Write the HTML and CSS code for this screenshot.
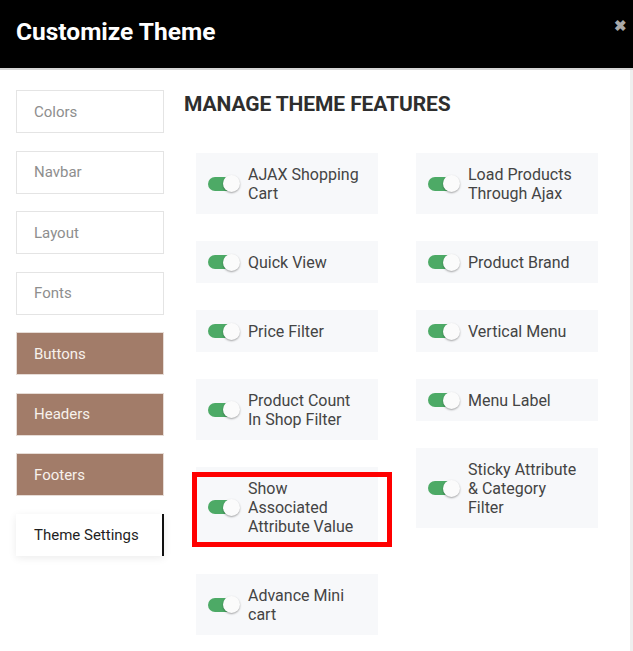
FILE: index.html
```html
<!DOCTYPE html>
<html lang="en">
<head>
<meta charset="utf-8">
<title>Customize Theme</title>
<link rel="stylesheet" href="styles.css">
</head>
<body>
<div class="modal">
  <header class="header">
    <h1 class="title">Customize Theme</h1>
    <span class="close">&#x2716;</span>
  </header>
  <div class="body">
    <nav class="sidebar">
      <div class="tab">Colors</div>
      <div class="tab">Navbar</div>
      <div class="tab">Layout</div>
      <div class="tab">Fonts</div>
      <div class="tab tab-brown">Buttons</div>
      <div class="tab tab-brown">Headers</div>
      <div class="tab tab-brown">Footers</div>
      <div class="tab tab-active">Theme Settings</div>
    </nav>
    <main class="main">
      <h2 class="heading">MANAGE THEME FEATURES</h2>
      <div class="features">
        <div class="col">
          <div class="card"><span class="toggle"></span><span class="label">AJAX Shopping Cart</span></div>
          <div class="card"><span class="toggle"></span><span class="label">Quick View</span></div>
          <div class="card"><span class="toggle"></span><span class="label">Price Filter</span></div>
          <div class="card"><span class="toggle"></span><span class="label">Product Count In Shop Filter</span></div>
          <div class="card card-marked"><span class="toggle"></span><span class="label">Show Associated Attribute Value</span></div>
          <div class="card"><span class="toggle"></span><span class="label">Advance Mini cart</span></div>
        </div>
        <div class="col">
          <div class="card"><span class="toggle"></span><span class="label">Load Products Through Ajax</span></div>
          <div class="card"><span class="toggle"></span><span class="label">Product Brand</span></div>
          <div class="card"><span class="toggle"></span><span class="label">Vertical Menu</span></div>
          <div class="card"><span class="toggle"></span><span class="label">Menu Label</span></div>
          <div class="card"><span class="toggle"></span><span class="label">Sticky Attribute &amp; Category Filter</span></div>
        </div>
      </div>
    </main>
  </div>
</div>
</body>
</html>
```

FILE: styles.css
```css
* { box-sizing: border-box; }
html, body { margin: 0; padding: 0; background: #fff; }
body { font-family: Roboto, "Liberation Sans", Arial, sans-serif; width: 633px; height: 651px; overflow: hidden; }

.modal { width: 633px; height: 651px; display: flex; flex-direction: column; }

.header {
  position: relative;
  height: 70px;
  flex: none;
  background: #000;
  border-bottom: 2px solid #d6d6d6;
  padding-left: 16px;
  display: flex;
  align-items: center;
}
.title {
  margin: 0 0 6px 0;
  color: #fff;
  font-size: 24.5px;
  font-weight: 700;
  letter-spacing: 0;
}
.close {
  position: absolute;
  top: 19px;
  right: 6px;
  color: #a9a9a9;
  font-size: 15px;
  font-weight: 700;
  line-height: 14px;
}

.body {
  flex: 1;
  display: flex;
  gap: 20px;
  padding: 20px 0 0 16px;
  border-right: 3px solid #efefef;
}

.sidebar {
  width: 148px;
  flex: none;
  display: flex;
  flex-direction: column;
  gap: 17.5px;
}
.tab {
  height: 43px;
  border: 1px solid #e4e4e4;
  padding-left: 17px;
  display: flex;
  align-items: center;
  font-size: 15px;
  color: #8e8e8e;
}
.tab-brown {
  background: #a27c69;
  border-color: #e6dcd6;
  color: #f7f1ec;
}
.tab-active {
  border: none;
  border-right: 2px solid #111;
  color: #1f1f1f;
  background: #fff;
  height: 42px;
  padding-left: 18px;
  box-shadow: 0 2px 8px rgba(0,0,0,0.08);
}

.main { flex: 1; }
.heading {
  margin: 2px 0 0 0;
  font-size: 21px;
  line-height: 24px;
  font-weight: 700;
  color: #2e2e2e;
  letter-spacing: -0.1px;
}

.features {
  display: flex;
  gap: 38px;
  margin: 37px 0 0 12px;
  align-items: flex-start;
}
.col {
  width: 182px;
  display: flex;
  flex-direction: column;
  gap: 27px;
}
.card {
  position: relative;
  background: #f7f8fa;
  display: flex;
  align-items: center;
  gap: 8px;
  padding: 11.5px 12px 11.5px 12px;
}
.label {
  flex: 1;
  font-size: 16px;
  line-height: 19px;
  color: #444;
  letter-spacing: 0;
  padding-right: 5px;
}
.toggle {
  position: relative;
  flex: none;
  width: 32px;
  height: 17px;
}
.toggle::before {
  content: "";
  position: absolute;
  left: 0;
  top: 1.5px;
  width: 28px;
  height: 14px;
  border-radius: 7px;
  background: #4daa66;
}
.toggle::after {
  content: "";
  position: absolute;
  right: 0;
  top: 0;
  width: 17px;
  height: 17px;
  border-radius: 50%;
  background: #fbfbfb;
  box-shadow: 0 1px 2px rgba(0,0,0,0.35);
}

.card-marked::after {
  content: "";
  position: absolute;
  left: -4px;
  right: -14px;
  top: 5px;
  bottom: 0;
  border: 5px solid #f00;
}
```
